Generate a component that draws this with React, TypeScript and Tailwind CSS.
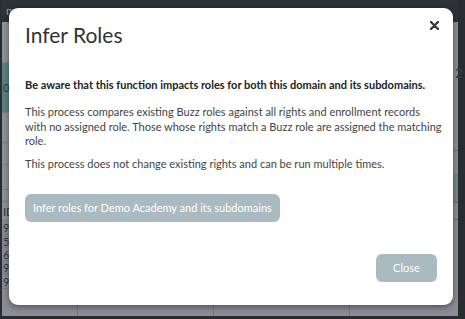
export default function App() {
  const leftRows = [
    { h: 'h-[41px]', bg: 'bg-[#8f9398]', t: '' },
    { h: 'h-[50px]', bg: 'bg-[#5b8385]', t: '0' },
    { h: 'h-[30px]', bg: 'bg-[#8f9398]', t: '' },
    { h: 'h-[22px]', bg: 'bg-[#8f9398]', t: '' },
    { h: 'h-[25px]', bg: 'bg-[#8f9398]', t: '' },
    { h: 'h-[12px]', bg: 'bg-[#8f9398]', t: '' },
    { h: 'h-[19px]', bg: 'bg-[#8f9398]', t: 'ID' },
    { h: 'h-[14px]', bg: 'bg-[#8e8b99]', t: '95' },
    { h: 'h-[13px]', bg: 'bg-[#8a8795]', t: '59' },
    { h: 'h-[13px]', bg: 'bg-[#8e8b99]', t: '60' },
    { h: 'h-[14px]', bg: 'bg-[#8a8795]', t: '95' },
    { h: 'h-[14px]', bg: 'bg-[#8e8b99]', t: '95' },
  ]

  return (
    <div className="relative w-[465px] h-[319px] overflow-hidden bg-[#2a2d30] font-['Lato',sans-serif]">
      {/* page behind the modal */}
      <div className="flex flex-col h-[316px] pl-[2px] pr-[7px]">
        <div className="h-[22px] bg-[#2d3236] flex items-center gap-10 pl-[4px] text-[11px] text-[#9aa3aa]">
          <span>ny</span>
          <span className="ml-[280px] text-[#6e767c]">▾</span>
        </div>
        <div className="flex-1 bg-[#8e9297] flex flex-col text-[11px] leading-[11px] text-[#33373c]">
          {leftRows.map((r, i) => (
            <div key={i} className={`${r.h} ${r.bg} border-b border-[#7d8186] flex items-center pl-[1px] overflow-hidden`}>
              {r.t}
            </div>
          ))}
          <div className="flex-1 bg-[#8e8b99] flex">
            <div className="w-[76px] border-r border-[#77747f]" />
            <div className="w-[136px] border-r border-[#77747f]" />
            <div className="w-[136px] border-r border-[#77747f]" />
          </div>
        </div>
      </div>

      {/* right edge strip */}
      <div className="absolute right-[7px] top-[22px] w-[6px] h-[294px] flex flex-col">
        <div className="h-[128px] bg-[#8a8f94]" />
        <div className="h-[24px] bg-[#8a8f94] border-t border-[#6c7075]" />
        <div className="h-[28px] bg-[#6f8890]" />
        <div className="h-[18px] bg-[#8a8f94] border-y border-[#6c7075]" />
        <div className="flex-1 bg-[#8e8b99]" />
      </div>
      <span className="absolute left-[455px] top-[64px] text-[13px] text-[#3b3f44]">2</span>

      {/* modal */}
      <div className="absolute left-[9px] top-[8px] w-[444px] h-[297px] rounded-[9px] bg-white shadow-[0_2px_6px_rgba(0,0,0,0.45)] flex flex-col px-[16px] text-[#333]">
        <div className="flex items-start justify-between pt-[14px]">
          <h1 className="text-[21px] leading-[26px] font-normal text-[#333]">Infer Roles</h1>
          <svg width="9" height="9" viewBox="0 0 9 9" className="mt-[-1px] mr-[-2px]">
            <path d="M1 1 L8 8 M8 1 L1 8" stroke="#3a3a3a" strokeWidth="2.4" strokeLinecap="round" />
          </svg>
        </div>
        <p className="mt-[29px] text-[11px] leading-[15px] font-bold text-[#222]">
          Be aware that this function impacts roles for both this domain and its subdomains.
        </p>
        <p className="mt-[13px] w-[424px] text-[11px] leading-[14.5px] text-[#444]">
          This process compares existing Buzz roles against all rights and enrollment records
          <br />
          with no assigned role. Those whose rights match a Buzz role are assigned the matching
          <br />
          role.
        </p>
        <p className="mt-[7px] text-[11px] leading-[15px] text-[#444]">
          This process does not change existing rights and can be run multiple times.
        </p>
        <div className="mt-[23px]">
          <button className="h-[28px] px-[8px] rounded-[6px] bg-[#aabac1] text-white text-[11px]">
            Infer roles for Demo Academy and its subdomains
          </button>
        </div>
        <div className="mt-auto mb-[23px] flex justify-end">
          <button className="h-[28px] w-[61px] rounded-[6px] bg-[#aabac1] text-white text-[11px]">Close</button>
        </div>
      </div>
    </div>
  )
}
